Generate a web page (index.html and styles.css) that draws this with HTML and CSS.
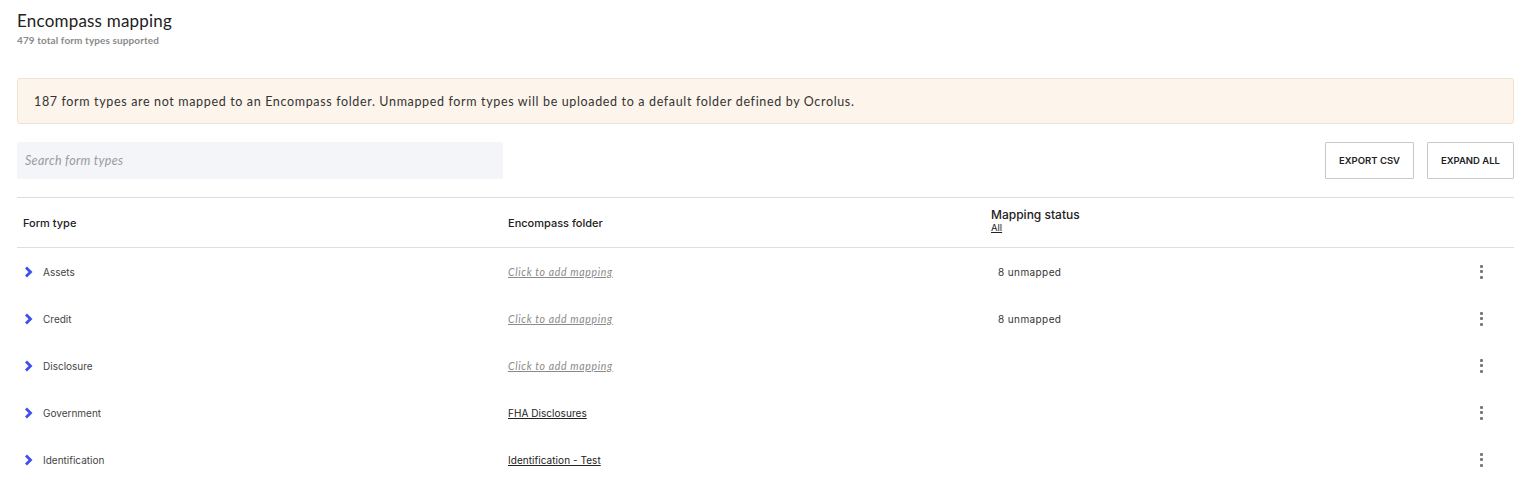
FILE: index.html
```html
<!DOCTYPE html>
<html>
<head>
<meta charset="utf-8">
<link rel="stylesheet" href="styles.css">
</head>
<body>
<div class="page">
  <header class="head">
    <h1 class="title">Encompass mapping</h1>
    <div class="subtitle">479 total form types supported</div>
  </header>
  <div class="banner">187 form types are not mapped to an Encompass folder. Unmapped form types will be uploaded to a default folder defined by Ocrolus.</div>
  <div class="toolbar">
    <div class="search">Search form types</div>
    <div class="actions">
      <button class="btn">EXPORT CSV</button>
      <button class="btn">EXPAND ALL</button>
    </div>
  </div>
  <div class="table">
    <div class="row thead">
      <div class="c1">Form type</div>
      <div class="c2">Encompass folder</div>
      <div class="c3"><div>Mapping status</div><a class="all">All</a></div>
      <div class="c4"></div>
    </div>
    <div class="row">
      <div class="c1"><svg class="chev" width="9" height="12" viewBox="0 0 9 12"><path d="M2 1.5 L6.5 6 L2 10.5" fill="none" stroke="#3d4ff0" stroke-width="2.8"/></svg><span>Assets</span></div>
      <div class="c2"><span class="add">Click to add mapping</span></div>
      <div class="c3 st">8 unmapped</div>
      <div class="c4"><span class="kebab"><i></i><i></i><i></i></span></div>
    </div>
    <div class="row">
      <div class="c1"><svg class="chev" width="9" height="12" viewBox="0 0 9 12"><path d="M2 1.5 L6.5 6 L2 10.5" fill="none" stroke="#3d4ff0" stroke-width="2.8"/></svg><span>Credit</span></div>
      <div class="c2"><span class="add">Click to add mapping</span></div>
      <div class="c3 st">8 unmapped</div>
      <div class="c4"><span class="kebab"><i></i><i></i><i></i></span></div>
    </div>
    <div class="row">
      <div class="c1"><svg class="chev" width="9" height="12" viewBox="0 0 9 12"><path d="M2 1.5 L6.5 6 L2 10.5" fill="none" stroke="#3d4ff0" stroke-width="2.8"/></svg><span>Disclosure</span></div>
      <div class="c2"><span class="add">Click to add mapping</span></div>
      <div class="c3 st"></div>
      <div class="c4"><span class="kebab"><i></i><i></i><i></i></span></div>
    </div>
    <div class="row">
      <div class="c1"><svg class="chev" width="9" height="12" viewBox="0 0 9 12"><path d="M2 1.5 L6.5 6 L2 10.5" fill="none" stroke="#3d4ff0" stroke-width="2.8"/></svg><span>Government</span></div>
      <div class="c2"><span class="folder">FHA Disclosures</span></div>
      <div class="c3 st"></div>
      <div class="c4"><span class="kebab"><i></i><i></i><i></i></span></div>
    </div>
    <div class="row">
      <div class="c1"><svg class="chev" width="9" height="12" viewBox="0 0 9 12"><path d="M2 1.5 L6.5 6 L2 10.5" fill="none" stroke="#3d4ff0" stroke-width="2.8"/></svg><span>Identification</span></div>
      <div class="c2"><span class="folder">Identification - Test</span></div>
      <div class="c3 st"></div>
      <div class="c4"><span class="kebab"><i></i><i></i><i></i></span></div>
    </div>
  </div>
</div>
</body>
</html>
```
FILE: styles.css
```css
* { box-sizing: border-box; }
html, body { margin: 0; padding: 0; background: #fff; }
body { font-family: "Lato", "Liberation Sans", sans-serif; color: #222; overflow: hidden; }
.page { padding: 10px 18px 0 17px; }
.head { height: 68px; }
.title { margin: 0; font-weight: 400; font-size: 17px; line-height: 22px; color: #222; letter-spacing: 0.2px; }
.subtitle { font-size: 10px; font-weight: 700; color: #8a8a8a; line-height: 14px; margin-top: 1px; letter-spacing: 0.1px; }
.banner { height: 46px; background: #fdf5ec; border: 1px solid #eee2d3; border-radius: 3px; padding: 0 16px; display: flex; align-items: center; font-size: 12.5px; letter-spacing: 0.65px; color: #333; }
.toolbar { display: flex; justify-content: space-between; align-items: flex-start; margin-top: 18px; height: 56px; border-bottom: 1px solid #dedede; }
.search { width: 486px; height: 37px; background: #f4f5f8; border-radius: 2px; display: flex; align-items: center; padding-left: 8px; font-style: italic; font-size: 12.5px; color: #9a9a9f; letter-spacing: 0.3px; }
.actions { display: flex; gap: 13px; }
.btn { height: 37px; background: #fff; border: 1px solid #c9c9c9; border-radius: 1px; font-family: "Inter", "Liberation Sans", sans-serif; font-weight: 600; font-size: 9.5px; color: #222; padding: 0; }
.btn:first-child { width: 89px; }
.btn:last-child { width: 87px; }
.row { display: flex; align-items: center; height: 47px; font-family: "Inter", sans-serif; font-size: 10px; color: #444; }
.thead { height: 50px; border-bottom: 1px solid #dedede; font-size: 11px; font-weight: 500; color: #222; }
.c1 { width: 491px; padding-left: 6px; display: flex; align-items: center; }
.c2 { width: 483px; }
.c3 { flex: 1; }
.c4 { width: 66px; display: flex; justify-content: center; }
.thead .c3 { font-size: 12px; margin-top: -5px; }
.thead .c3 .all { display: block; font-size: 9.5px; font-weight: 400; text-decoration: underline; margin-top: 0; color: #222; }
.chev { margin-left: 1px; margin-right: 10px; }
.add { font-style: italic; text-decoration: underline; color: #8a8a8a; letter-spacing: 0.65px; font-family: "Lato", sans-serif; font-size: 10.5px; }
.folder { text-decoration: underline; color: #222; letter-spacing: 0.05px; }
.st { padding-left: 7px; color: #333; letter-spacing: 0.4px; }
.kebab { display: flex; flex-direction: column; gap: 2.5px; }
.kebab i { display: block; width: 3px; height: 3px; border-radius: 1px; background: #777; }
```
